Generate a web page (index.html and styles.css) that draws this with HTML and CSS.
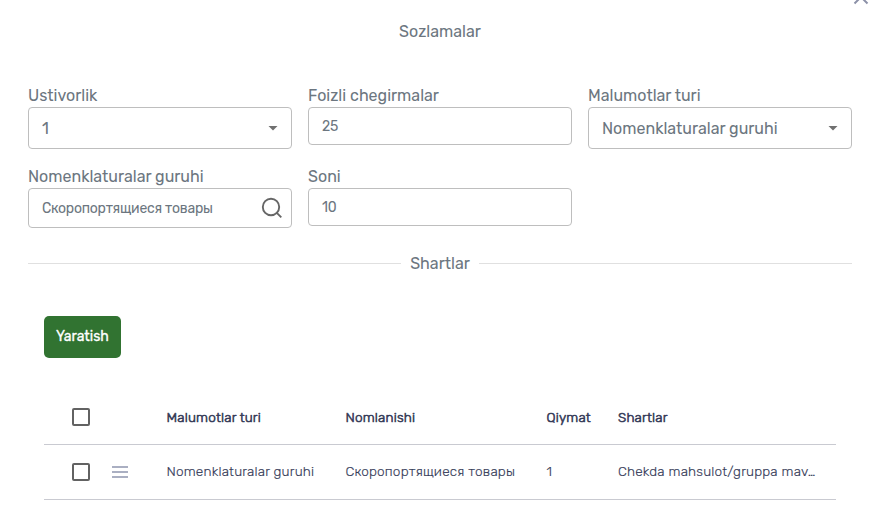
FILE: index.html
```html
<!DOCTYPE html>
<html lang="uz">
<head>
<meta charset="utf-8">
<title>Sozlamalar</title>
<link rel="stylesheet" href="styles.css">
</head>
<body>
<main class="dialog">
  <svg class="close" width="16" height="16" viewBox="0 0 16 16"><path d="M1.5 1.5l13 13M14.5 1.5l-13 13"/></svg>
  <h1 class="title">Sozlamalar</h1>
  <form class="fields">
    <div class="field">
      <label class="label">Ustivorlik</label>
      <div class="control select"><span>1</span><i class="caret"></i></div>
    </div>
    <div class="field">
      <label class="label">Foizli chegirmalar</label>
      <div class="control input"><span>25</span></div>
    </div>
    <div class="field">
      <label class="label">Malumotlar turi</label>
      <div class="control select"><span>Nomenklaturalar guruhi</span><i class="caret"></i></div>
    </div>
    <div class="field">
      <label class="label">Nomenklaturalar guruhi</label>
      <div class="control lookup"><span>Скоропортящиеся товары</span>
        <svg class="search" width="22" height="22" viewBox="0 0 22 22"><circle cx="10" cy="10" r="8.2"/><path d="M15.3 15.3l5 5"/></svg>
      </div>
    </div>
    <div class="field">
      <label class="label">Soni</label>
      <div class="control input"><span>10</span></div>
    </div>
  </form>
  <div class="divider"><span>Shartlar</span></div>
  <section class="conditions">
    <button class="create" type="button">Yaratish</button>
    <div class="table">
      <div class="row head">
        <i class="check"></i><span></span>
        <span>Malumotlar turi</span><span>Nomlanishi</span><span>Qiymat</span><span>Shartlar</span>
      </div>
      <div class="row">
        <i class="check"></i>
        <svg class="menu" width="16" height="12" viewBox="0 0 16 12"><path d="M0 1h16M0 6h16M0 11h16"/></svg>
        <span class="cell">Nomenklaturalar guruhi</span><span class="cell">Скоропортящиеся товары</span><span class="cell">1</span><span class="cell">Chekda mahsulot/gruppa mav…</span>
      </div>
    </div>
  </section>
</main>
</body>
</html>
```

FILE: styles.css
```css
* { box-sizing: border-box; }
body {
  margin: 0;
  background: #fff;
  color: #6c7680;
  font: 16px/21px Rubik, Roboto, "Liberation Sans", sans-serif;
}
.dialog { position: relative; height: 522px; padding: 21px 25px 0 28px; overflow: hidden; }
.close { position: absolute; top: -11px; left: 853px; fill: none; stroke: #8c91a8; stroke-width: 2; }
.title { margin: 0 0 44px; font-size: 16px; font-weight: 400; text-align: center; }
.fields { display: grid; grid-template-columns: repeat(3, 264px); gap: 18px 16px; align-items: start; }
.label { display: block; height: 21px; line-height: 19px; white-space: nowrap; }
.control {
  display: flex;
  align-items: center;
  justify-content: space-between;
  padding: 0 13px;
  border: 1px solid #bebebe;
  border-radius: 4px;
  white-space: nowrap;
}
.select { height: 42px; }
.input { height: 38px; font-size: 14px; letter-spacing: -0.2px; }
.lookup { height: 40px; padding-right: 8px; font-size: 14px; letter-spacing: -0.24px; }
.caret { width: 10px; height: 5px; background: #707070; clip-path: polygon(0 0, 100% 0, 50% 100%); }
.search { fill: none; stroke: #666; stroke-width: 1.9; }
.divider { display: flex; align-items: center; gap: 9px; margin: 25px 0 42px; }
.divider::before, .divider::after { content: ""; flex: 1; height: 1px; background: #e0e0e0; }
.conditions { padding: 0 16px; }
.create {
  display: block;
  width: 77px;
  height: 42px;
  padding: 0;
  border: 0;
  border-radius: 5px;
  background: #317331;
  color: #fff;
  font: 400 14px/20px Rubik, Roboto, sans-serif;
  -webkit-text-stroke: 0.3px #fff;
}
.table { margin-top: 32px; color: #343a57; font-size: 13.6px; font-weight: 300; letter-spacing: 0.18px; }
.row {
  display: grid;
  grid-template-columns: 40px 54.5px 179px 201px 71.5px 1fr;
  align-items: center;
  height: 55px;
  padding-left: 28px;
  border-bottom: 1px solid #c9cad1;
  white-space: nowrap;
}
.cell { margin-top: -1px; -webkit-text-stroke: 0.15px #343a57; }
.head { -webkit-text-stroke: 0.6px #343a57; }
.check { width: 18px; height: 18px; border: 2px solid #626262; border-radius: 2px; }
.menu { fill: none; stroke: #aaafc2; stroke-width: 2; }
```
